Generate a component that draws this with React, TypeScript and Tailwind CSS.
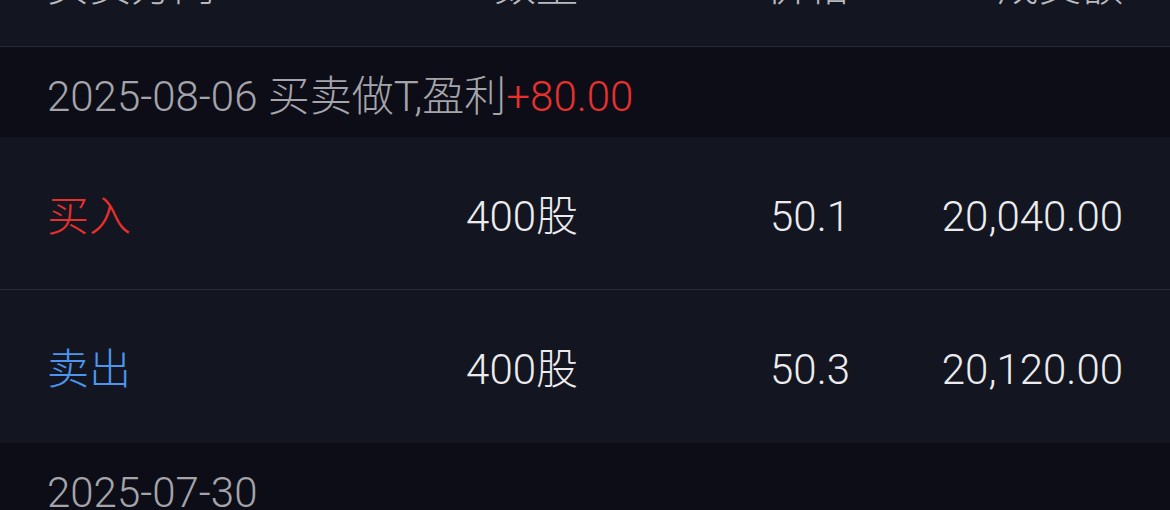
const trades = [
  { side: '买入', qty: '400股', price: '50.1', amount: '20,040.00', color: 'text-[#e8302e]' },
  { side: '卖出', qty: '400股', price: '50.3', amount: '20,120.00', color: 'text-[#4c96ef]' },
]

const Cols = ({ a, b, c, d, aClass }: { a: string; b: string; c: string; d: string; aClass: string }) => (
  <div className="flex items-center pl-[47px] pr-[47px]">
    <span className={`flex-1 ${aClass}`}>{a}</span>
    <span className="w-[200px] text-right">{b}</span>
    <span className="w-[272px] text-right">{c}</span>
    <span className="w-[273px] text-right">{d}</span>
  </div>
)

const App = () => {
  return (
    <div
      className="w-[1170px] h-[510px] overflow-hidden bg-[#0c0d16] text-[42px] leading-[50px] font-light"
      style={{ fontFamily: 'Roboto, "Noto Sans CJK SC", sans-serif' }}>
      {/* column titles, scrolled mostly out of view */}
      <div className="h-[47px] bg-[#131620] border-b border-[#2a2b37] text-[#b9bac0] overflow-hidden">
        <div className="mt-[-38px]">
          <Cols a="买卖方向" b="数量" c="价格" d="成交额" aClass="" />
        </div>
      </div>

      <div className="h-[90px] pt-[25px] pl-[47px] text-[#a4a4aa]">
        2025-08-06 买卖做T,盈利<span className="text-[#e8302e]">+80.00</span>
      </div>

      {trades.map((t, i) => (
        <div
          key={i}
          className={`h-[153px] bg-[#131620] pt-[55px] text-[#ececee] ${i === 0 ? 'border-b border-[#2a2b37]' : ''}`}>
          <Cols a={t.side} b={t.qty} c={t.price} d={t.amount} aClass={t.color} />
        </div>
      ))}

      <div className="h-[90px] pt-[25px] pl-[47px] text-[#a4a4aa]">2025-07-30</div>
    </div>
  )
}

export default App
